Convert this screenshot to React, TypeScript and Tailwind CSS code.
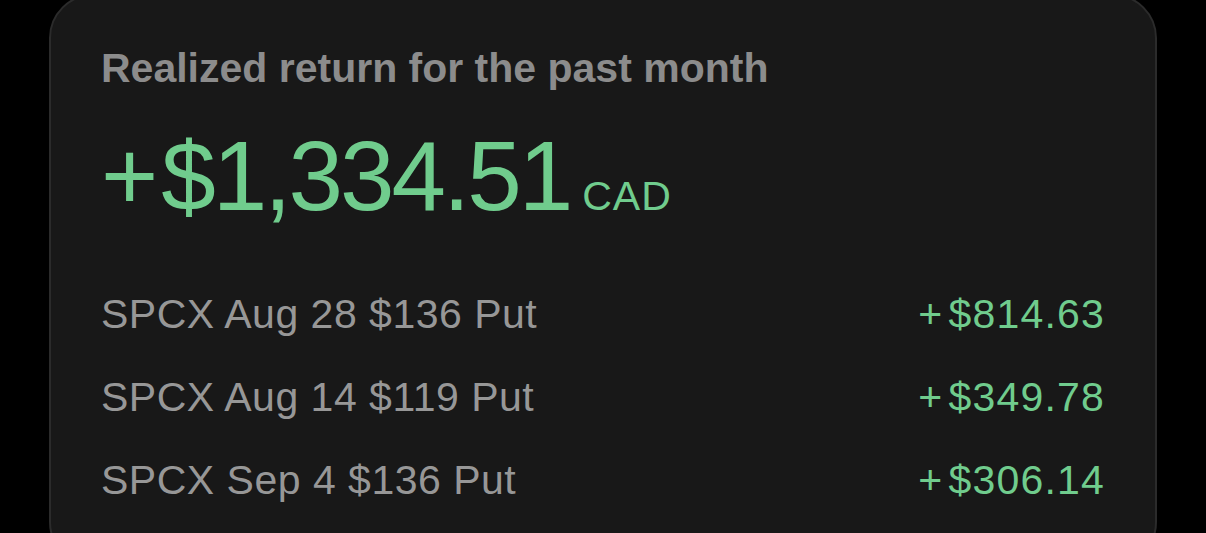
import React from 'react';

interface Trade {
  label: string;
  amount: string;
}

const trades: Trade[] = [
  { label: 'SPCX Aug 28 $136 Put', amount: '$814.63' },
  { label: 'SPCX Aug 14 $119 Put', amount: '$349.78' },
  { label: 'SPCX Sep 4 $136 Put', amount: '$306.14' },
];

const App: React.FC = () => {
  return (
    <div className="h-[533px] w-full overflow-hidden bg-black px-[49px] font-['Liberation_Sans',Arial,sans-serif]">
      <div className="-mt-[6px] rounded-[44px] border-2 border-[#2b2b2b] bg-[#181818] px-[50px] pt-[48px] pb-[60px]">
        <h2 className="text-[41px] leading-[48px] font-bold text-[#8c8c8c]">
          Realized return for the past month
        </h2>

        <div className="mt-[35px] flex items-baseline text-[#70cc8d]">
          <span className="text-[98px] leading-none">+</span>
          <span className="ml-[3px] text-[98px] leading-none tracking-[-3px]">$1,334.51</span>
          <span className="ml-[12px] text-[41px] leading-none tracking-[1px]">CAD</span>
        </div>

        <div className="mt-[65px] flex flex-col gap-[35px]">
          {trades.map(trade => (
            <div key={trade.label} className="flex items-baseline justify-between text-[41px] leading-[48px]">
              <span className="tracking-[0.5px] text-[#979797]">{trade.label}</span>
              <span className="tracking-[1.2px] text-[#70cc8d]">
                <span className="mr-[5px]">+</span>
                {trade.amount}
              </span>
            </div>
          ))}
        </div>
      </div>
    </div>
  );
};

export default App;
